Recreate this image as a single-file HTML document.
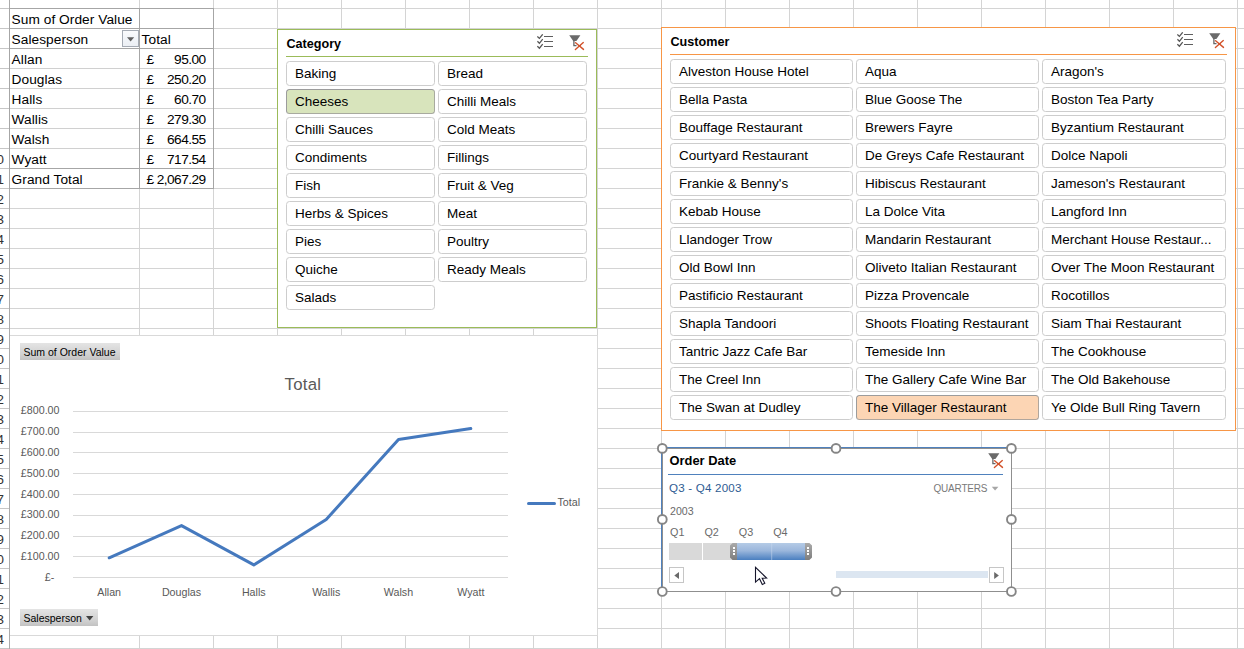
<!DOCTYPE html>
<html lang="en"><head><meta charset="utf-8"><title>Pivot slicers</title>
<style>
html,body{margin:0;padding:0}
body{width:1244px;height:649px;overflow:hidden;background:#fff;position:relative;font-family:"Liberation Sans",sans-serif;color:#000}
.abs,.abs *{position:absolute}
#sheet{position:absolute;left:0;top:0;width:1244px;height:649px;overflow:hidden}
.c{position:absolute;height:20px;line-height:20px;font-size:13.7px;white-space:pre;letter-spacing:0.05px;margin-top:1px;margin-left:-0.4px}
.n{letter-spacing:-0.55px}
.rn{position:absolute;left:-16px;margin-top:0.7px;width:20px;text-align:right;height:20px;line-height:20px;font-size:13.4px;color:#333;white-space:pre}
.slicer{position:absolute;background:#fff;box-sizing:border-box}
.sl-t{position:absolute;font-weight:bold;font-size:12.6px;line-height:16px;white-space:pre}
.sb{position:absolute;box-sizing:border-box;height:25px;border:1px solid #cdcdcd;border-radius:3.5px;background:#fff;font-size:13.5px;line-height:23px;padding-left:8px;white-space:pre;overflow:hidden}
.sb.g{background:#d8e4bc;border-color:#9c9c9c #a8aa9f #a8aa9f #9c9c9c}
.sb.o{background:#fcd5b4;border-color:#9c9c9c #b0a69d #b0a69d #9c9c9c}
.ct{position:absolute;white-space:pre;color:#595959;font-size:10.7px;line-height:12px}
.fb{position:absolute;box-sizing:border-box;background:linear-gradient(#e4e4e4,#d0d0d0 70%,#c2c2c2);font-size:10.5px;line-height:19px;white-space:pre;color:#000}
.tl{position:absolute;white-space:pre}
</style></head><body><div id="sheet">

<svg style="position:absolute;left:0;top:0" width="1244" height="649" shape-rendering="crispEdges">
<g stroke="#d4d4d4" stroke-width="1">
<line x1="139.5" y1="0" x2="139.5" y2="649"/>
<line x1="213.5" y1="0" x2="213.5" y2="649"/>
<line x1="277.5" y1="0" x2="277.5" y2="649"/>
<line x1="341.5" y1="0" x2="341.5" y2="649"/>
<line x1="405.5" y1="0" x2="405.5" y2="649"/>
<line x1="469.5" y1="0" x2="469.5" y2="649"/>
<line x1="533.5" y1="0" x2="533.5" y2="649"/>
<line x1="597.5" y1="0" x2="597.5" y2="649"/>
<line x1="661.5" y1="0" x2="661.5" y2="649"/>
<line x1="725.5" y1="0" x2="725.5" y2="649"/>
<line x1="789.5" y1="0" x2="789.5" y2="649"/>
<line x1="853.5" y1="0" x2="853.5" y2="649"/>
<line x1="917.5" y1="0" x2="917.5" y2="649"/>
<line x1="981.5" y1="0" x2="981.5" y2="649"/>
<line x1="1045.5" y1="0" x2="1045.5" y2="649"/>
<line x1="1109.5" y1="0" x2="1109.5" y2="649"/>
<line x1="1173.5" y1="0" x2="1173.5" y2="649"/>
<line x1="1237.5" y1="0" x2="1237.5" y2="649"/>
<line x1="10" y1="8.5" x2="1244" y2="8.5"/>
<line x1="10" y1="28.5" x2="1244" y2="28.5"/>
<line x1="10" y1="48.5" x2="1244" y2="48.5"/>
<line x1="10" y1="68.5" x2="1244" y2="68.5"/>
<line x1="10" y1="88.5" x2="1244" y2="88.5"/>
<line x1="10" y1="108.5" x2="1244" y2="108.5"/>
<line x1="10" y1="128.5" x2="1244" y2="128.5"/>
<line x1="10" y1="148.5" x2="1244" y2="148.5"/>
<line x1="10" y1="168.5" x2="1244" y2="168.5"/>
<line x1="10" y1="188.5" x2="1244" y2="188.5"/>
<line x1="10" y1="208.5" x2="1244" y2="208.5"/>
<line x1="10" y1="228.5" x2="1244" y2="228.5"/>
<line x1="10" y1="248.5" x2="1244" y2="248.5"/>
<line x1="10" y1="268.5" x2="1244" y2="268.5"/>
<line x1="10" y1="288.5" x2="1244" y2="288.5"/>
<line x1="10" y1="308.5" x2="1244" y2="308.5"/>
<line x1="10" y1="328.5" x2="1244" y2="328.5"/>
<line x1="10" y1="348.5" x2="1244" y2="348.5"/>
<line x1="10" y1="368.5" x2="1244" y2="368.5"/>
<line x1="10" y1="388.5" x2="1244" y2="388.5"/>
<line x1="10" y1="408.5" x2="1244" y2="408.5"/>
<line x1="10" y1="428.5" x2="1244" y2="428.5"/>
<line x1="10" y1="448.5" x2="1244" y2="448.5"/>
<line x1="10" y1="468.5" x2="1244" y2="468.5"/>
<line x1="10" y1="488.5" x2="1244" y2="488.5"/>
<line x1="10" y1="508.5" x2="1244" y2="508.5"/>
<line x1="10" y1="528.5" x2="1244" y2="528.5"/>
<line x1="10" y1="548.5" x2="1244" y2="548.5"/>
<line x1="10" y1="568.5" x2="1244" y2="568.5"/>
<line x1="10" y1="588.5" x2="1244" y2="588.5"/>
<line x1="10" y1="608.5" x2="1244" y2="608.5"/>
<line x1="10" y1="628.5" x2="1244" y2="628.5"/>
<line x1="10" y1="648.5" x2="1244" y2="648.5"/>
</g><g stroke="#c6c6c6" stroke-width="1">
<line x1="0" y1="8.5" x2="10" y2="8.5"/>
<line x1="0" y1="28.5" x2="10" y2="28.5"/>
<line x1="0" y1="48.5" x2="10" y2="48.5"/>
<line x1="0" y1="68.5" x2="10" y2="68.5"/>
<line x1="0" y1="88.5" x2="10" y2="88.5"/>
<line x1="0" y1="108.5" x2="10" y2="108.5"/>
<line x1="0" y1="128.5" x2="10" y2="128.5"/>
<line x1="0" y1="148.5" x2="10" y2="148.5"/>
<line x1="0" y1="168.5" x2="10" y2="168.5"/>
<line x1="0" y1="188.5" x2="10" y2="188.5"/>
<line x1="0" y1="208.5" x2="10" y2="208.5"/>
<line x1="0" y1="228.5" x2="10" y2="228.5"/>
<line x1="0" y1="248.5" x2="10" y2="248.5"/>
<line x1="0" y1="268.5" x2="10" y2="268.5"/>
<line x1="0" y1="288.5" x2="10" y2="288.5"/>
<line x1="0" y1="308.5" x2="10" y2="308.5"/>
<line x1="0" y1="328.5" x2="10" y2="328.5"/>
<line x1="0" y1="348.5" x2="10" y2="348.5"/>
<line x1="0" y1="368.5" x2="10" y2="368.5"/>
<line x1="0" y1="388.5" x2="10" y2="388.5"/>
<line x1="0" y1="408.5" x2="10" y2="408.5"/>
<line x1="0" y1="428.5" x2="10" y2="428.5"/>
<line x1="0" y1="448.5" x2="10" y2="448.5"/>
<line x1="0" y1="468.5" x2="10" y2="468.5"/>
<line x1="0" y1="488.5" x2="10" y2="488.5"/>
<line x1="0" y1="508.5" x2="10" y2="508.5"/>
<line x1="0" y1="528.5" x2="10" y2="528.5"/>
<line x1="0" y1="548.5" x2="10" y2="548.5"/>
<line x1="0" y1="568.5" x2="10" y2="568.5"/>
<line x1="0" y1="588.5" x2="10" y2="588.5"/>
<line x1="0" y1="608.5" x2="10" y2="608.5"/>
<line x1="0" y1="628.5" x2="10" y2="628.5"/>
<line x1="0" y1="648.5" x2="10" y2="648.5"/>
</g><line x1="9.5" y1="0" x2="9.5" y2="649" stroke="#ababab"/>
</svg>
<div class="rn" style="top:149px">10</div>
<div class="rn" style="top:169px">11</div>
<div class="rn" style="top:189px">12</div>
<div class="rn" style="top:209px">13</div>
<div class="rn" style="top:229px">14</div>
<div class="rn" style="top:249px">15</div>
<div class="rn" style="top:269px">16</div>
<div class="rn" style="top:289px">17</div>
<div class="rn" style="top:309px">18</div>
<div class="rn" style="top:329px">19</div>
<div class="rn" style="top:349px">20</div>
<div class="rn" style="top:369px">21</div>
<div class="rn" style="top:389px">22</div>
<div class="rn" style="top:409px">23</div>
<div class="rn" style="top:429px">24</div>
<div class="rn" style="top:449px">25</div>
<div class="rn" style="top:469px">26</div>
<div class="rn" style="top:489px">27</div>
<div class="rn" style="top:509px">28</div>
<div class="rn" style="top:529px">29</div>
<div class="rn" style="top:549px">30</div>
<div class="rn" style="top:569px">31</div>
<div class="rn" style="top:589px">32</div>
<div class="rn" style="top:609px">33</div>
<div class="rn" style="top:629px">34</div>
<div class="rn" style="top:649px">35</div>
<svg style="position:absolute;left:0;top:0" width="230" height="200" shape-rendering="crispEdges">
<rect x="10" y="9" width="203" height="179" fill="#fff"/>
<g stroke="#d0d0d0">
<line x1="10" y1="68.5" x2="213" y2="68.5"/>
<line x1="10" y1="88.5" x2="213" y2="88.5"/>
<line x1="10" y1="108.5" x2="213" y2="108.5"/>
<line x1="10" y1="128.5" x2="213" y2="128.5"/>
<line x1="10" y1="148.5" x2="213" y2="148.5"/>
</g><g stroke="#a6a6a6">
<line x1="9" y1="8.5" x2="214" y2="8.5"/>
<line x1="9" y1="28.5" x2="214" y2="28.5"/>
<line x1="9" y1="48.5" x2="214" y2="48.5"/>
<line x1="9" y1="168.5" x2="214" y2="168.5"/>
<line x1="9" y1="188.5" x2="214" y2="188.5"/>
<line x1="9.5" y1="8" x2="9.5" y2="189"/>
<line x1="139.5" y1="8" x2="139.5" y2="189"/>
<line x1="213.5" y1="8" x2="213.5" y2="189"/>
</g></svg>
<div class="c" style="left:12px;top:9px">Sum of Order Value</div>
<div class="c" style="left:12px;top:29px">Salesperson</div>
<div class="c" style="left:142px;top:29px">Total</div>
<div style="position:absolute;left:122px;top:30px;width:17px;height:17px;box-sizing:border-box;border:1px solid #a5abb4;background:linear-gradient(#fafbfc,#f1f4f8 55%,#eceff4)"><svg style="position:absolute;left:4px;top:6px" width="8" height="5"><path d="M0 0.200h7.200L3.600 4.400z" fill="#606060"/></svg></div>
<div class="c" style="left:12px;top:49px">Allan</div>
<div class="c" style="left:147px;top:49px">£</div>
<div class="c n" style="left:150px;width:56px;text-align:right;top:49px">95.00</div>
<div class="c" style="left:12px;top:69px">Douglas</div>
<div class="c" style="left:147px;top:69px">£</div>
<div class="c n" style="left:150px;width:56px;text-align:right;top:69px">250.20</div>
<div class="c" style="left:12px;top:89px">Halls</div>
<div class="c" style="left:147px;top:89px">£</div>
<div class="c n" style="left:150px;width:56px;text-align:right;top:89px">60.70</div>
<div class="c" style="left:12px;top:109px">Wallis</div>
<div class="c" style="left:147px;top:109px">£</div>
<div class="c n" style="left:150px;width:56px;text-align:right;top:109px">279.30</div>
<div class="c" style="left:12px;top:129px">Walsh</div>
<div class="c" style="left:147px;top:129px">£</div>
<div class="c n" style="left:150px;width:56px;text-align:right;top:129px">664.55</div>
<div class="c" style="left:12px;top:149px">Wyatt</div>
<div class="c" style="left:147px;top:149px">£</div>
<div class="c n" style="left:150px;width:56px;text-align:right;top:149px">717.54</div>
<div class="c" style="left:12px;top:169px">Grand Total</div>
<div class="c" style="left:147px;top:169px">£</div>
<div class="c n" style="left:150px;width:56px;text-align:right;top:169px">2,067.29</div>
<div class="slicer" style="left:277px;top:29px;width:320px;height:299px;border:1.2px solid #9bbb59;border-width:1px">
<div class="sl-t" style="left:8.5px;top:6px">Category</div>
<div style="position:absolute;left:8px;top:26px;width:302px;height:1.4px;background:#9bbb59"></div>
<svg class="ic" style="position:absolute;left:259px;top:4px" width="18" height="16" viewBox="0 0 18 16"><g fill="none" stroke="#555" stroke-width="1.250"><path d="M0.400 2.400l2 2 3.300-4.100M0.400 7.300l2 2 3.300-4.100M0.400 12.200l2 2 3.300-4.100"/></g><g stroke="#5e5e5e" stroke-width="1" shape-rendering="crispEdges"><path d="M7 2.5h9M7 7.5h9M7 12.5h9"/></g></svg>
<svg style="position:absolute;left:291px;top:5px" width="17" height="17" viewBox="0 0 17 17"><path d="M0.200 0.200h11.200L7.400 6H4.200z" fill="#6a6a6a"/><path d="M4.900 5V10.700H7.500" fill="none" stroke="#666" stroke-width="1.300"/><path d="M6.600 7.800l7.900 6.600M14.300 7.600l-7.900 7" stroke="#d2522a" stroke-width="1.400" fill="none" stroke-linecap="round"/></svg>
<div class="sb" style="left:8px;top:31px;width:149px">Baking</div>
<div class="sb" style="left:160px;top:31px;width:149px">Bread</div>
<div class="sb g" style="left:8px;top:59px;width:149px">Cheeses</div>
<div class="sb" style="left:160px;top:59px;width:149px">Chilli Meals</div>
<div class="sb" style="left:8px;top:87px;width:149px">Chilli Sauces</div>
<div class="sb" style="left:160px;top:87px;width:149px">Cold Meats</div>
<div class="sb" style="left:8px;top:115px;width:149px">Condiments</div>
<div class="sb" style="left:160px;top:115px;width:149px">Fillings</div>
<div class="sb" style="left:8px;top:143px;width:149px">Fish</div>
<div class="sb" style="left:160px;top:143px;width:149px">Fruit &amp; Veg</div>
<div class="sb" style="left:8px;top:171px;width:149px">Herbs &amp; Spices</div>
<div class="sb" style="left:160px;top:171px;width:149px">Meat</div>
<div class="sb" style="left:8px;top:199px;width:149px">Pies</div>
<div class="sb" style="left:160px;top:199px;width:149px">Poultry</div>
<div class="sb" style="left:8px;top:227px;width:149px">Quiche</div>
<div class="sb" style="left:160px;top:227px;width:149px">Ready Meals</div>
<div class="sb" style="left:8px;top:255px;width:149px">Salads</div>
</div>
<div class="slicer" style="left:661px;top:27px;width:575px;height:404px;border:1px solid #f79646">
<div class="sl-t" style="left:8.5px;top:6px">Customer</div>
<div style="position:absolute;left:8px;top:26px;width:557px;height:1.4px;background:#f79646"></div>
<svg class="ic" style="position:absolute;left:515px;top:4px" width="18" height="16" viewBox="0 0 18 16"><g fill="none" stroke="#555" stroke-width="1.250"><path d="M0.400 2.400l2 2 3.300-4.100M0.400 7.300l2 2 3.300-4.100M0.400 12.200l2 2 3.300-4.100"/></g><g stroke="#5e5e5e" stroke-width="1" shape-rendering="crispEdges"><path d="M7 2.5h9M7 7.5h9M7 12.5h9"/></g></svg>
<svg style="position:absolute;left:547px;top:5px" width="17" height="17" viewBox="0 0 17 17"><path d="M0.200 0.200h11.200L7.400 6H4.200z" fill="#6a6a6a"/><path d="M4.900 5V10.700H7.500" fill="none" stroke="#666" stroke-width="1.300"/><path d="M6.600 7.800l7.900 6.600M14.300 7.600l-7.900 7" stroke="#d2522a" stroke-width="1.400" fill="none" stroke-linecap="round"/></svg>
<div class="sb" style="left:8px;top:31px;width:183px">Alveston House Hotel</div>
<div class="sb" style="left:194px;top:31px;width:183px">Aqua</div>
<div class="sb" style="left:380px;top:31px;width:184px">Aragon's</div>
<div class="sb" style="left:8px;top:59px;width:183px">Bella Pasta</div>
<div class="sb" style="left:194px;top:59px;width:183px">Blue Goose The</div>
<div class="sb" style="left:380px;top:59px;width:184px">Boston Tea Party</div>
<div class="sb" style="left:8px;top:87px;width:183px">Bouffage Restaurant</div>
<div class="sb" style="left:194px;top:87px;width:183px">Brewers Fayre</div>
<div class="sb" style="left:380px;top:87px;width:184px">Byzantium Restaurant</div>
<div class="sb" style="left:8px;top:115px;width:183px">Courtyard Restaurant</div>
<div class="sb" style="left:194px;top:115px;width:183px">De Greys Cafe Restaurant</div>
<div class="sb" style="left:380px;top:115px;width:184px">Dolce Napoli</div>
<div class="sb" style="left:8px;top:143px;width:183px">Frankie &amp; Benny's</div>
<div class="sb" style="left:194px;top:143px;width:183px">Hibiscus Restaurant</div>
<div class="sb" style="left:380px;top:143px;width:184px">Jameson's Restaurant</div>
<div class="sb" style="left:8px;top:171px;width:183px">Kebab House</div>
<div class="sb" style="left:194px;top:171px;width:183px">La Dolce Vita</div>
<div class="sb" style="left:380px;top:171px;width:184px">Langford Inn</div>
<div class="sb" style="left:8px;top:199px;width:183px">Llandoger Trow</div>
<div class="sb" style="left:194px;top:199px;width:183px">Mandarin Restaurant</div>
<div class="sb" style="left:380px;top:199px;width:184px">Merchant House Restaur...</div>
<div class="sb" style="left:8px;top:227px;width:183px">Old Bowl Inn</div>
<div class="sb" style="left:194px;top:227px;width:183px">Oliveto Italian Restaurant</div>
<div class="sb" style="left:380px;top:227px;width:184px">Over The Moon Restaurant</div>
<div class="sb" style="left:8px;top:255px;width:183px">Pastificio Restaurant</div>
<div class="sb" style="left:194px;top:255px;width:183px">Pizza Provencale</div>
<div class="sb" style="left:380px;top:255px;width:184px">Rocotillos</div>
<div class="sb" style="left:8px;top:283px;width:183px">Shapla Tandoori</div>
<div class="sb" style="left:194px;top:283px;width:183px">Shoots Floating Restaurant</div>
<div class="sb" style="left:380px;top:283px;width:184px">Siam Thai Restaurant</div>
<div class="sb" style="left:8px;top:311px;width:183px">Tantric Jazz Cafe Bar</div>
<div class="sb" style="left:194px;top:311px;width:183px">Temeside Inn</div>
<div class="sb" style="left:380px;top:311px;width:184px">The Cookhouse</div>
<div class="sb" style="left:8px;top:339px;width:183px">The Creel Inn</div>
<div class="sb" style="left:194px;top:339px;width:183px">The Gallery Cafe Wine Bar</div>
<div class="sb" style="left:380px;top:339px;width:184px">The Old Bakehouse</div>
<div class="sb" style="left:8px;top:367px;width:183px">The Swan at Dudley</div>
<div class="sb o" style="left:194px;top:367px;width:183px">The Villager Restaurant</div>
<div class="sb" style="left:380px;top:367px;width:184px">Ye Olde Bull Ring Tavern</div>
</div>
<div style="position:absolute;left:10px;top:335px;width:588px;height:301px;box-sizing:border-box;background:#fff;border:1px solid #d9d9d9;border-left:none"></div>
<svg style="position:absolute;left:0;top:330px" width="610" height="319">
<g stroke="#d9d9d9" stroke-width="1" shape-rendering="crispEdges">
<line x1="73" y1="247.5" x2="508" y2="247.5"/>
<line x1="73" y1="226.5" x2="508" y2="226.5"/>
<line x1="73" y1="206.5" x2="508" y2="206.5"/>
<line x1="73" y1="185.5" x2="508" y2="185.5"/>
<line x1="73" y1="164.5" x2="508" y2="164.5"/>
<line x1="73" y1="143.5" x2="508" y2="143.5"/>
<line x1="73" y1="122.5" x2="508" y2="122.5"/>
<line x1="73" y1="102.5" x2="508" y2="102.5"/>
<line x1="73" y1="81.5" x2="508" y2="81.5"/>
</g>
<polyline points="109.2,227.8 181.5,195.6 253.8,234.9 326.2,189.5 398.5,109.6 470.8,98.6" fill="none" stroke="#4579be" stroke-width="3" stroke-linecap="round" stroke-linejoin="round"/>
<line x1="528.5" y1="173.5" x2="554.5" y2="173.5" stroke="#4579be" stroke-width="3" stroke-linecap="round"/>
</svg>
<div class="ct" style="left:284.5px;top:375px;font-size:16.8px;line-height:20px;letter-spacing:0.25px">Total</div>
<div class="ct" style="left:20px;width:34.3px;text-align:right;top:570.5px">£-</div>
<div class="ct" style="left:15px;width:44.5px;text-align:right;top:549.8px">£100.00</div>
<div class="ct" style="left:15px;width:44.5px;text-align:right;top:529.0px">£200.00</div>
<div class="ct" style="left:15px;width:44.5px;text-align:right;top:508.2px">£300.00</div>
<div class="ct" style="left:15px;width:44.5px;text-align:right;top:487.5px">£400.00</div>
<div class="ct" style="left:15px;width:44.5px;text-align:right;top:466.8px">£500.00</div>
<div class="ct" style="left:15px;width:44.5px;text-align:right;top:446.0px">£600.00</div>
<div class="ct" style="left:15px;width:44.5px;text-align:right;top:425.2px">£700.00</div>
<div class="ct" style="left:15px;width:44.5px;text-align:right;top:404.0px">£800.00</div>
<div class="ct" style="left:69.2px;width:80px;text-align:center;top:586px">Allan</div>
<div class="ct" style="left:141.5px;width:80px;text-align:center;top:586px">Douglas</div>
<div class="ct" style="left:213.8px;width:80px;text-align:center;top:586px">Halls</div>
<div class="ct" style="left:286.2px;width:80px;text-align:center;top:586px">Wallis</div>
<div class="ct" style="left:358.5px;width:80px;text-align:center;top:586px">Walsh</div>
<div class="ct" style="left:430.8px;width:80px;text-align:center;top:586px">Wyatt</div>
<div class="ct" style="left:557.5px;top:496px">Total</div>
<div class="fb" style="left:20px;top:343px;width:100px;height:17px;padding-left:3.5px">Sum of Order Value</div>
<div class="fb" style="left:20px;top:609px;width:78px;height:17px;padding-left:3.5px">Salesperson<svg style="position:absolute;left:66px;top:7px" width="8" height="5"><path d="M0 0h7.4L3.7 4.4z" fill="#404040"/></svg></div>
<div style="position:absolute;left:661px;top:447px;width:351px;height:145px;background:#fff;box-sizing:border-box"></div>
<div class="sl-t" style="left:669.5px;top:453px;font-size:12.9px">Order Date</div>
<div style="position:absolute;left:668px;top:474px;width:335px;height:1.4px;background:#4f81bd"></div>
<svg style="position:absolute;left:987.9px;top:453.2px" width="17" height="17" viewBox="0 0 17 17"><path d="M0.200 0.200h11.200L7.400 6H4.200z" fill="#6a6a6a"/><path d="M4.900 5V10.700H7.500" fill="none" stroke="#666" stroke-width="1.300"/><path d="M6.600 7.800l7.900 6.600M14.300 7.600l-7.900 7" stroke="#d2522a" stroke-width="1.400" fill="none" stroke-linecap="round"/></svg>
<div class="tl" style="left:669px;top:481px;font-size:11.6px;line-height:14px;letter-spacing:0.2px;color:#2f5c92">Q3 - Q4 2003</div>
<div class="tl" style="left:933.5px;top:481.5px;font-size:10px;line-height:14px;color:#7a7a7a;letter-spacing:-0.2px">QUARTERS</div>
<svg style="position:absolute;left:991px;top:486px" width="9" height="6"><path d="M0.8 0.8h6.6L4.1 4.6z" fill="#a6a6a6"/></svg>
<div class="tl" style="left:670px;top:504px;font-size:10.6px;line-height:14px;color:#6a6a6a">2003</div>
<div class="tl" style="left:670.0px;top:525px;font-size:10.8px;line-height:14px;color:#6a6a6a">Q1</div>
<div class="tl" style="left:704.4px;top:525px;font-size:10.8px;line-height:14px;color:#6a6a6a">Q2</div>
<div class="tl" style="left:738.8px;top:525px;font-size:10.8px;line-height:14px;color:#6a6a6a">Q3</div>
<div class="tl" style="left:773.2px;top:525px;font-size:10.8px;line-height:14px;color:#6a6a6a">Q4</div>
<svg style="position:absolute;left:660px;top:540px" width="160" height="24">
<defs><linearGradient id="bg" x1="0" y1="0" x2="0" y2="1"><stop offset="0" stop-color="#b5cbe6"/><stop offset="0.45" stop-color="#9bb7dc"/><stop offset="1" stop-color="#4a7fc0"/></linearGradient>
<linearGradient id="hg" x1="0" y1="0" x2="0" y2="1"><stop offset="0" stop-color="#aaaaaa"/><stop offset="1" stop-color="#7e7e7e"/></linearGradient></defs>
<rect x="9" y="3" width="33" height="17" fill="#d9d9d9"/>
<rect x="43" y="3" width="33" height="17" fill="#d9d9d9"/>
<rect x="76" y="3" width="71" height="17" fill="url(#bg)"/>
<rect x="111.200" y="3" width="1" height="17" fill="#c9d9ee" opacity="0.550"/>
<path d="M77 3V20H72.600L70 17.400V5.600L72.600 3z" fill="url(#hg)"/>
<path d="M145 3V20h4.400L152 17.400V5.600L149.400 3z" fill="url(#hg)"/>
<g fill="#fff"><rect x="73" y="7" width="2" height="2"/><rect x="73" y="10" width="2" height="2"/><rect x="73" y="13" width="2" height="2"/>
<rect x="147" y="7" width="2" height="2"/><rect x="147" y="10" width="2" height="2"/><rect x="147" y="13" width="2" height="2"/></g>
</svg>
<div style="position:absolute;left:669px;top:567px;width:15px;height:16px;box-sizing:border-box;border:1px solid #c6c6c6;background:#fff"><svg style="position:absolute;left:3.800px;top:3.800px" width="6" height="8"><path d="M5 0v7L0.300 3.500z" fill="#6a6a6a"/></svg></div>
<div style="position:absolute;left:989px;top:567px;width:15px;height:16px;box-sizing:border-box;border:1px solid #c6c6c6;background:#fff"><svg style="position:absolute;left:3.800px;top:3.800px" width="6" height="8"><path d="M0.200 0v7L4.900 3.500z" fill="#6a6a6a"/></svg></div>
<div style="position:absolute;left:836px;top:571px;width:152px;height:7px;background:#dce6f1"></div>
<svg style="position:absolute;left:650px;top:436px" width="375" height="170">
<g fill="none" shape-rendering="crispEdges"><path d="M12 11.500H361.500M361.500 12V155.500" stroke="#4f81bd" stroke-width="0" /><line x1="12" y1="11.500" x2="361" y2="11.500" stroke="#4f81bd" stroke-width="1"/><line x1="12" y1="12.500" x2="361" y2="12.500" stroke="#8f8f8f"/><line x1="11.500" y1="11" x2="11.500" y2="156" stroke="#4f81bd"/><line x1="12.500" y1="12" x2="12.500" y2="156" stroke="#8f8f8f"/><line x1="361.500" y1="12" x2="361.500" y2="156" stroke="#8f8f8f"/><line x1="11" y1="155.500" x2="362" y2="155.500" stroke="#8f8f8f"/></g>
<g fill="#fff" stroke="#858585" stroke-width="1.900">
<circle cx="12.3" cy="12.4" r="4.400"/>
<circle cx="186" cy="12.4" r="4.400"/>
<circle cx="361.4" cy="12.4" r="4.400"/>
<circle cx="12.3" cy="83.4" r="4.400"/>
<circle cx="361.4" cy="83.4" r="4.400"/>
<circle cx="12.3" cy="155.5" r="4.400"/>
<circle cx="186" cy="155.5" r="4.400"/>
<circle cx="361.4" cy="155.5" r="4.400"/>
</g></svg>
<svg style="position:absolute;left:750px;top:560px" width="24" height="30" viewBox="0 0 24 30"><path d="M5.500 7.300V22.100L9.500 18.700l2.800 5.800 2.500-1.200-2.600-5 4.400-0.200z" fill="#fff" stroke="#15152b" stroke-width="1.100" stroke-linejoin="miter"/></svg>
</div></body></html>
